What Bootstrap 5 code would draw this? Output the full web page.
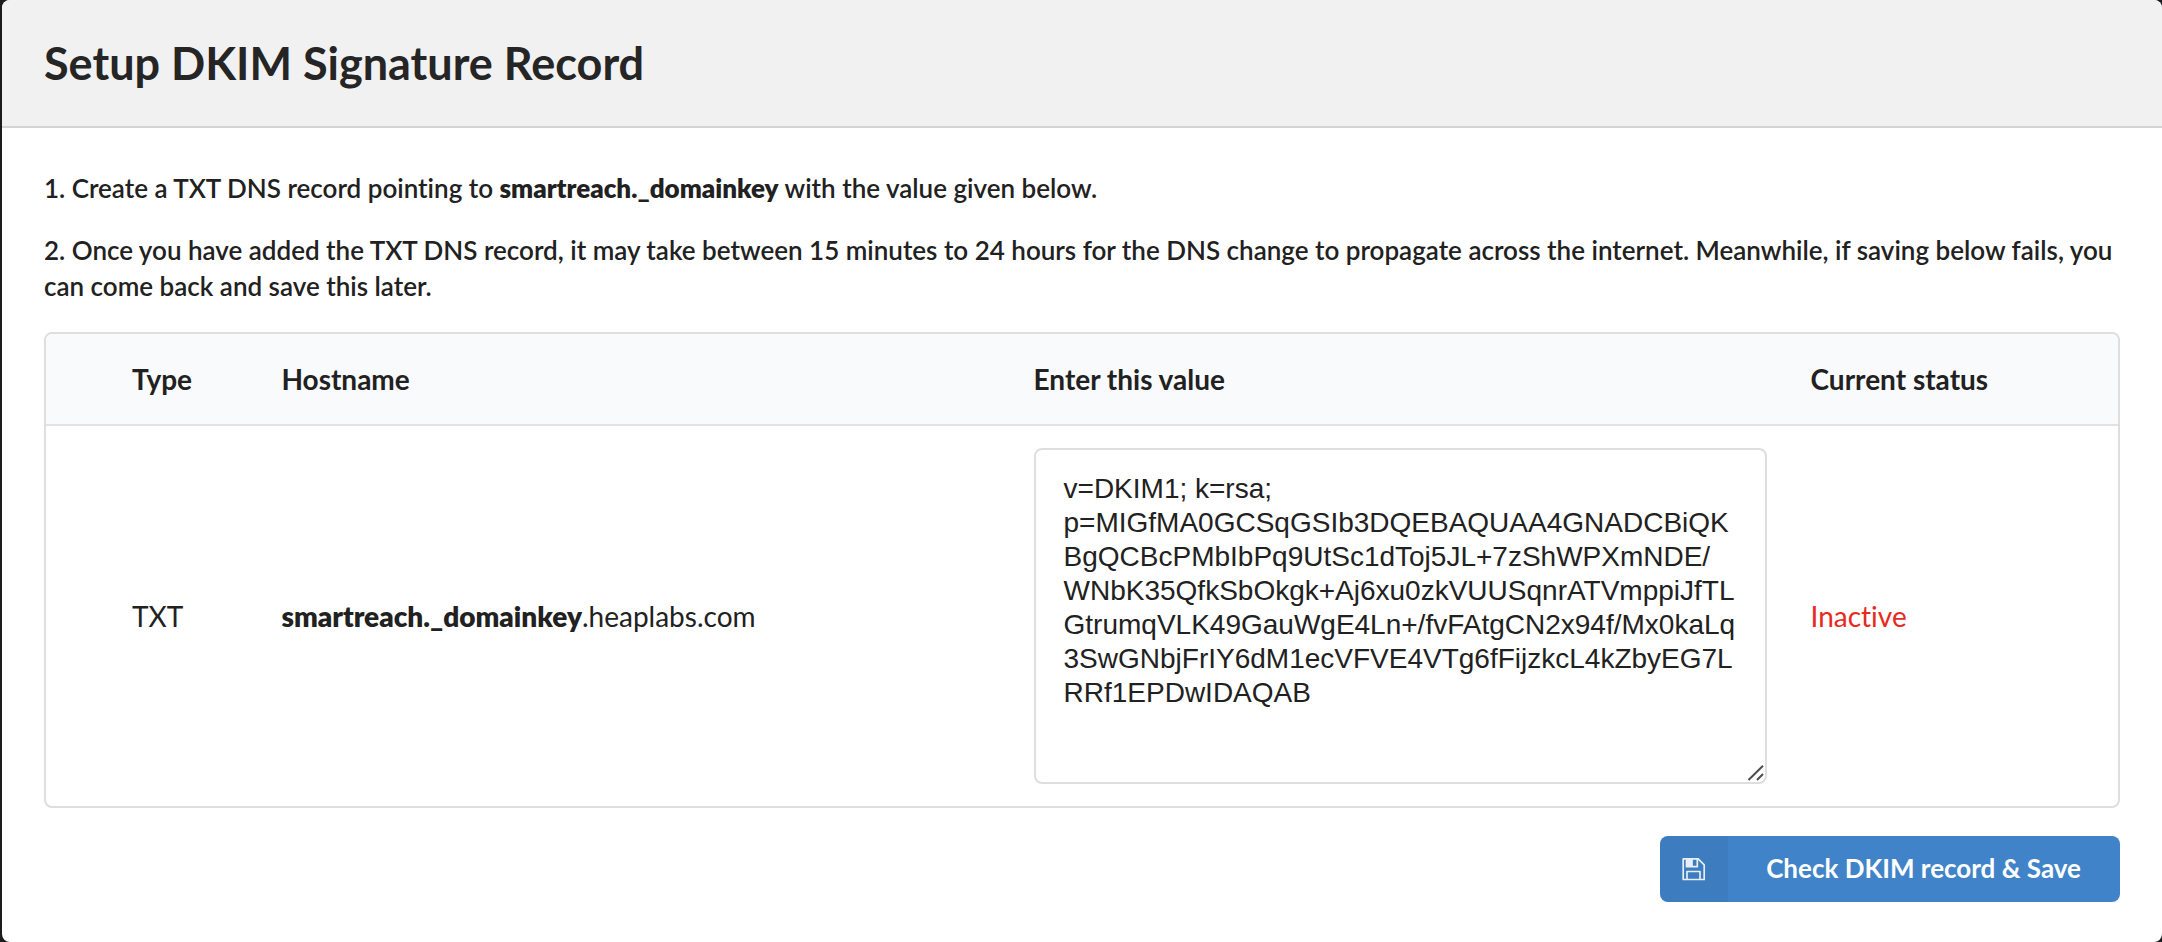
<!DOCTYPE html>
<html lang="en">
<head>
<meta charset="utf-8">
<meta name="viewport" content="width=device-width, initial-scale=1">
<title>Setup DKIM Signature Record</title>
<link href="https://cdn.jsdelivr.net/npm/bootstrap@5.3.0/dist/css/bootstrap.min.css" rel="stylesheet">
<style>
  body { background: #1b1c1d; color: #212121; font-family: Lato, sans-serif; font-size: 28px; line-height: 36px; font-variant-ligatures: none; }
  .dkim-panel { min-height: 100vh; margin-left: 2px; background: #fff; border-radius: 8px; overflow: hidden; }
  .dkim-head { background: #f1f1f1; border-bottom: 2px solid #d4d4d5; padding: 36px 42px; }
  .dkim-head h1 { font-size: 45px; line-height: 54px; font-weight: 700; color: #252525; }
  .dkim-body { padding: 42px 42px 40px; }
  .dkim-steps { font-size: 26px; font-weight: 600; margin-bottom: 28px; }
  .dkim-steps p { margin-bottom: 26px; }
  .dkim-steps strong { font-weight: 800; }
  .dkim-frame { border: 2px solid #dededf; border-radius: 8px; overflow: hidden; margin-bottom: 28px; }
  .dkim-table { table-layout: fixed; color: inherit; }
  .dkim-table th, .dkim-table td { padding: 22px; border: 0; color: inherit; vertical-align: middle; }
  .dkim-table th { background: #f9fafb; border-bottom: 2px solid #e1e2e3; font-weight: 700; padding: 27px 22px; }
  .dkim-table th:first-child, .dkim-table td:first-child { padding-left: 86px; }
  .dkim-table strong { font-weight: 800; }
  .col-type { width: 10.3%; }
  .col-host { width: 36.3%; }
  .col-value { width: 37.5%; }
  .dkim-table .status-off { color: #e8291f; }
  .dkim-value { display: block; height: 336px; padding: 22px 28px; border: 2px solid #dededf; border-radius: 8px; color: #212121; font-family: "Liberation Sans", Arial, sans-serif; font-size: 28px; line-height: 34px; overflow: hidden; resize: none; }
  .grip { right: 2px; bottom: 3px; pointer-events: none; }
  .btn-save { background: #4183c9; color: #fff; border: 0; border-radius: 8px; font-size: 26px; font-weight: 700; line-height: 36px; overflow: hidden; }
  .btn-save:hover { background: #3874b6; color: #fff; }
  .btn-save .icon-box { width: 68px; background: rgba(0,0,0,.05); }
  .btn-save .caption { padding: 14px 39px 16px 38px; }
</style>
</head>
<body>
<main class="dkim-panel">
  <header class="dkim-head"><h1 class="m-0">Setup DKIM Signature Record</h1></header>
  <div class="dkim-body">
    <div class="dkim-steps">
      <p>1. Create a TXT DNS record pointing to <strong>smartreach._domainkey</strong> with the value given below.</p>
      <p>2. Once you have added the TXT DNS record, it may take between 15 minutes to 24 hours for the DNS change to propagate across the internet. Meanwhile, if saving below fails, you can come back and save this later.</p>
    </div>
    <div class="dkim-frame">
      <table class="table dkim-table mb-0">
        <colgroup><col class="col-type"><col class="col-host"><col class="col-value"><col></colgroup>
        <thead>
          <tr><th scope="col">Type</th><th scope="col">Hostname</th><th scope="col" id="value-label">Enter this value</th><th scope="col">Current status</th></tr>
        </thead>
        <tbody>
          <tr>
            <td>TXT</td>
            <td><strong>smartreach._domainkey</strong>.heaplabs.com</td>
            <td>
              <div class="position-relative">
                <textarea class="form-control dkim-value" aria-labelledby="value-label" spellcheck="false">v=DKIM1; k=rsa; p=MIGfMA0GCSqGSIb3DQEBAQUAA4GNADCBiQKBgQCBcPMbIbPq9UtSc1dToj5JL+7zShWPXmNDE/WNbK35QfkSbOkgk+Aj6xu0zkVUUSqnrATVmppiJfTLGtrumqVLK49GauWgE4Ln+/fvFAtgCN2x94f/Mx0kaLq3SwGNbjFrIY6dM1ecVFVE4VTg6fFijzkcL4kZbyEG7LRRf1EPDwIDAQAB</textarea>
                <svg class="grip position-absolute" width="18" height="16" viewBox="0 0 18 16" fill="none" stroke="#4d4d4d" stroke-width="2" aria-hidden="true"><path d="M1.500 15L16 .8M10 15l6-6"/></svg>
              </div>
            </td>
            <td class="status-off">Inactive</td>
          </tr>
        </tbody>
      </table>
    </div>
    <div class="d-flex justify-content-end">
      <button type="button" class="btn btn-save d-flex align-items-stretch p-0">
        <span class="icon-box d-flex align-items-center justify-content-center">
          <svg width="24" height="24" viewBox="0 0 24 24" fill="none" stroke="#e6eef8" stroke-width="1.700" stroke-linejoin="round" aria-hidden="true"><path d="M1.200 1.800h15l6 6v14.700h-21zM5 22v-7.500h13V22"/><path d="M4.500 1.800v7.900h10.800V1.800"/><path d="M5 2h5v7H5z" fill="#e6eef8"/></svg>
        </span>
        <span class="caption">Check DKIM record &amp; Save</span>
      </button>
    </div>
  </div>
</main>
<script src="https://cdn.jsdelivr.net/npm/bootstrap@5.3.0/dist/js/bootstrap.bundle.min.js"></script>
</body>
</html>
